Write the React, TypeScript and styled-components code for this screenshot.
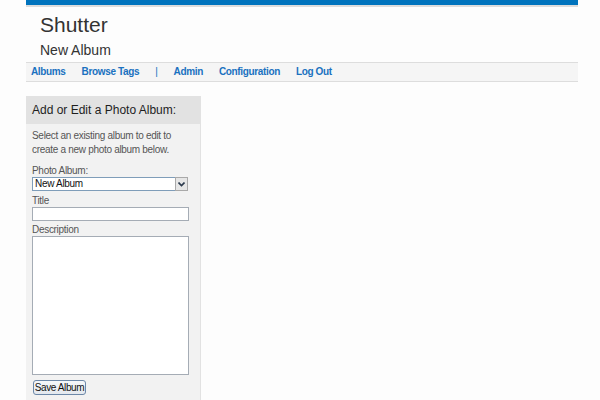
import React from 'react';
import styled, { createGlobalStyle } from 'styled-components';

const GlobalStyle = createGlobalStyle`
    html, body {
        margin: 0;
        padding: 0;
        background: #fdfdfd;
        font-family: "Liberation Sans", Arial, sans-serif;
    }
`;

// the original page uses a condensed sans for its small text
const smallText = `
    font-family: "Liberation Sans", Arial, sans-serif;
    font-size: 10px;
    letter-spacing: -0.3px;
`;

const navLinks = ['Albums', 'Browse Tags', '|', 'Admin', 'Configuration', 'Log Out'];

const App = () => {
    return (
        <>
            <GlobalStyle />
            <Page>
                <TopBar />
                <Header>
                    <SiteTitle>Shutter</SiteTitle>
                    <PageTitle>New Album</PageTitle>
                </Header>
                <Nav>
                    {navLinks.map((l, i) =>
                        l === '|'
                            ? <Divider key={i}>|</Divider>
                            : <NavLink key={i} href="#">{l}</NavLink>
                    )}
                </Nav>
                <Sidebar>
                    <SidebarHeader>Add or Edit a Photo Album:</SidebarHeader>
                    <SidebarBody>
                        <Intro>Select an existing album to edit to create a new photo album below.</Intro>
                        <Label>Photo Album:</Label>
                        <SelectWrap>
                            <Select defaultValue="new">
                                <option value="new">New Album</option>
                            </Select>
                            <SelectArrow>
                                <svg width="7" height="5" viewBox="0 0 7 5">
                                    <path d="M0.5 0.5 L3.5 3.5 L6.5 0.5" fill="none" stroke="#2b3a4d" strokeWidth="1.6" />
                                </svg>
                            </SelectArrow>
                        </SelectWrap>
                        <Label>Title</Label>
                        <TextInput type="text" />
                        <Label>Description</Label>
                        <TextArea />
                        <SaveButton>Save Album</SaveButton>
                    </SidebarBody>
                </Sidebar>
            </Page>
        </>
    );
};

export default App;

const Page = styled.div`
    width: 552px;
    margin-left: 26px;
    display: flex;
    flex-direction: column;
`;

const TopBar = styled.div`
    height: 5px;
    background: #0073bd;
    border-bottom: 2px solid #dcdcdc;
`;

const Header = styled.div`
    height: 49px;
    padding: 6px 0 0 14px;
    color: #333;
`;

const SiteTitle = styled.div`
    font-size: 21px;
    line-height: 24px;
`;

const PageTitle = styled.div`
    font-size: 14px;
    line-height: 18px;
    margin-top: 4px;
`;

const Nav = styled.div`
    display: flex;
    align-items: center;
    gap: 16px;
    height: 18px;
    padding-left: 5px;
    background: #f5f5f5;
    border-top: 1px solid #dddddd;
    border-bottom: 1px solid #dddddd;
`;

const NavLink = styled.a`
    ${smallText}
    letter-spacing: -0.35px;
    line-height: 18px;
    font-weight: bold;
    color: #1a71c0;
    text-decoration: none;
`;

const Divider = styled.span`
    ${smallText}
    line-height: 18px;
    color: #1a71c0;
`;

const Sidebar = styled.div`
    margin-top: 14px;
    width: 174px;
    min-height: 320px;
    background: #f2f2f2;
    border-right: 1px solid #e2e2e2;
`;

const SidebarHeader = styled.div`
    background: #e2e2e2;
    height: 28px;
    line-height: 28px;
    padding-left: 6px;
    font-size: 12px;
    letter-spacing: 0;
    color: #1e1e1e;
`;

const SidebarBody = styled.div`
    padding: 5px 6px;
    display: flex;
    flex-direction: column;
    align-items: flex-start;
    ${smallText}
`;

const Intro = styled.p`
    margin: 0 0 8px;
    line-height: 14px;
    color: #555;
`;

const Label = styled.label`
    line-height: 12px;
    color: #555;
`;

const SelectWrap = styled.div`
    position: relative;
    width: 156px;
    height: 14px;
    margin-bottom: 4px;
`;

const Select = styled.select`
    appearance: none;
    box-sizing: border-box;
    display: block;
    width: 100%;
    height: 14px;
    ${smallText}
    line-height: 12px;
    padding: 0 0 0 2px;
    margin: 0;
    border: 1px solid #7f9db9;
    border-radius: 0;
    background: #fff;
    color: #111;
    outline: none;
`;

const SelectArrow = styled.span`
    position: absolute;
    top: 0;
    right: 0;
    width: 13px;
    height: 14px;
    box-sizing: border-box;
    display: flex;
    align-items: center;
    justify-content: center;
    background: #e6e6e6;
    border: 1px solid #a9a9a9;
    pointer-events: none;
`;

const TextInput = styled.input`
    box-sizing: border-box;
    width: 157px;
    height: 14px;
    margin: 0 0 3px;
    border: 1px solid #a5acb5;
    background: #fff;
    outline: none;
`;

const TextArea = styled.textarea`
    box-sizing: border-box;
    width: 157px;
    height: 139px;
    margin: 0 0 5px;
    border: 1px solid #a5acb5;
    background: #fff;
    resize: none;
    outline: none;
`;

const SaveButton = styled.button`
    box-sizing: border-box;
    ${smallText}
    letter-spacing: -0.4px;
    color: #111;
    width: 53px;
    height: 15px;
    padding: 0;
    line-height: 12px;
    margin-left: 1px;
    background: linear-gradient(#f6f8fa, #e3e8ee);
    border: 1px solid #6d88a8;
    border-radius: 3px;
`;
